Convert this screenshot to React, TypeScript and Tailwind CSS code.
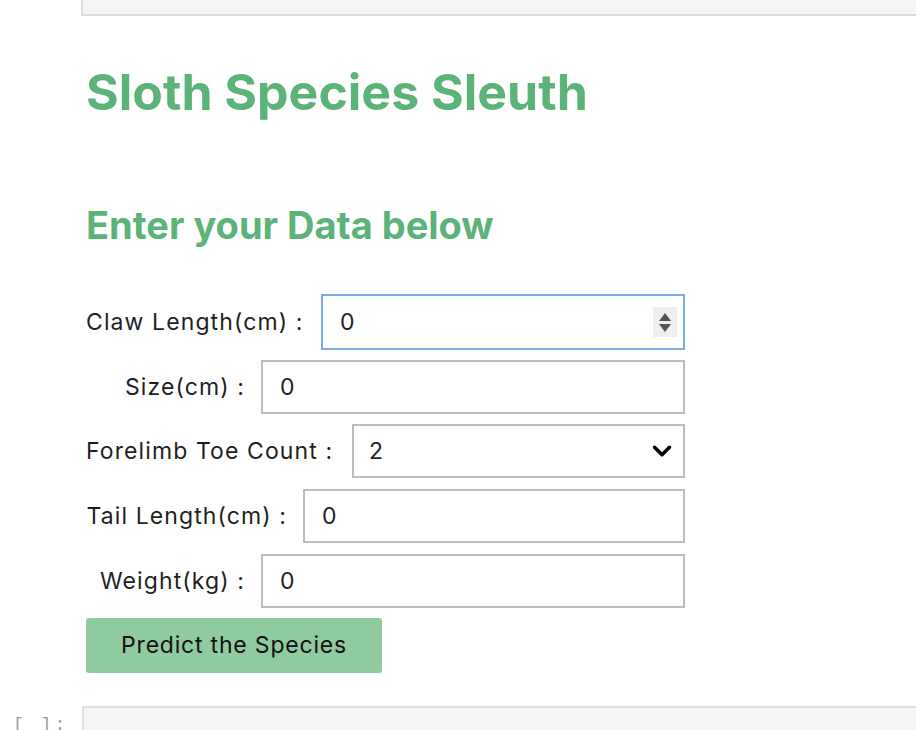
import { ChevronDown } from 'lucide-react';

const txt = 'text-[23px] tracking-[1.1px] text-[#1f1f1f]';

function Field({
  label,
  labelW,
  inputGap,
  value,
  className = '',
}: {
  label: string;
  labelW: string;
  inputGap: string;
  value: string;
  className?: string;
}) {
  return (
    <div className={`flex items-center ${className}`}>
      <label className={`shrink-0 whitespace-nowrap text-right ${labelW} ${txt}`}>{label}</label>
      <div className={`flex h-[54px] flex-1 items-center border-2 border-[#bdbdbd] bg-white pl-[17px] ${inputGap} ${txt}`}>
        {value}
      </div>
    </div>
  );
}

export default function App() {
  return (
    <div className="h-[730px] w-[916px] overflow-hidden bg-white font-['Inter','Liberation_Sans',sans-serif]">
      {/* previous notebook cell */}
      <div className="ml-[81px] h-[16px] border-b-2 border-l-2 border-[#dcdcdc] bg-[#f5f5f5]" />

      <div className="w-[685px] pl-[86px]">
        <h1 className="mt-[46px] text-[50px] font-bold leading-[60px] text-[#5cb37a]">Sloth Species Sleuth</h1>
        <h2 className="mt-[80px] text-[38px] font-bold leading-[46px] text-[#5cb37a]">Enter your Data below</h2>

        <div className="mt-[46px] flex flex-col">
          <div className="flex items-center">
            <label className={`w-[217px] shrink-0 whitespace-nowrap ${txt}`}>Claw Length(cm) :</label>
            <div className={`ml-[18px] flex h-[56px] flex-1 items-center justify-between border-2 border-[#7aaee8] bg-white pl-[17px] pr-[6px] ${txt}`}>
              <span>0</span>
              <span className="flex h-[30px] w-[24px] flex-col items-center justify-center gap-[3px] bg-[#efefef]">
                <svg width="12" height="8" viewBox="0 0 12 8"><path d="M6 0L12 8H0Z" fill="#555" /></svg>
                <svg width="12" height="8" viewBox="0 0 12 8"><path d="M0 0H12L6 8Z" fill="#555" /></svg>
              </span>
            </div>
          </div>

          <Field className="mt-[10px]" label="Size(cm) :" labelW="w-[159px]" inputGap="ml-[16px]" value="0" />

          <div className="mt-[10px] flex items-center">
            <label className={`w-[249px] shrink-0 whitespace-nowrap ${txt}`}>Forelimb Toe Count :</label>
            <div className={`ml-[17px] flex h-[54px] flex-1 items-center justify-between border-2 border-[#bdbdbd] bg-white pl-[15px] pr-[6px] ${txt}`}>
              <span>2</span>
              <ChevronDown className="h-[30px] w-[30px] text-black" strokeWidth={2.8} />
            </div>
          </div>

          <Field className="mt-[11px]" label="Tail Length(cm) :" labelW="w-[201px]" inputGap="ml-[16px]" value="0" />
          <Field className="mt-[11px]" label="Weight(kg) :" labelW="w-[159px]" inputGap="ml-[16px]" value="0" />

          <button className="mt-[10px] h-[55px] w-[296px] rounded-[3px] bg-[#90cba0] text-[23px] tracking-[0.8px] text-[#111]">
            Predict the Species
          </button>
        </div>
      </div>

      {/* next notebook cell */}
      <div className="mt-[33px] flex">
        <span className="w-[82px] pl-[13px] pt-[9px] font-['Liberation_Mono',monospace] text-[18px] leading-[20px] tracking-[3px] text-[#9e9e9e]">[ ]:</span>
        <div className="h-[40px] flex-1 border-l-2 border-t-2 border-[#e0e0e0] bg-[#f5f5f5]" />
      </div>
    </div>
  );
}
